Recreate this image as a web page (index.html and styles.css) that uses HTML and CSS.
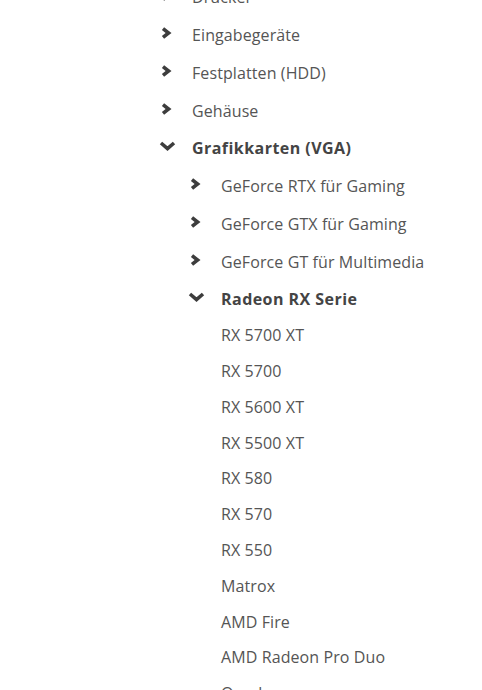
FILE: index.html
```html
<!DOCTYPE html>
<html lang="de">
<head>
    <meta charset="UTF-8">
    <meta name="viewport" content="width=device-width, initial-scale=1.0">
    <title>Kategorien</title>
    <link rel="stylesheet" href="styles.css">
</head>
<body>
  <nav class="category_tree">
    <ul class="level_one">
      <li><div class="row"><span class="toggle"><svg class="chev" viewBox="0 0 17 14"><polyline points="4,2.6 9.6,7 4,11.4"/></svg></span><span class="label">Drucker</span></div></li>
      <li><div class="row"><span class="toggle"><svg class="chev" viewBox="0 0 17 14"><polyline points="4,2.6 9.6,7 4,11.4"/></svg></span><span class="label">Eingabegeräte</span></div></li>
      <li><div class="row"><span class="toggle"><svg class="chev" viewBox="0 0 17 14"><polyline points="4,2.6 9.6,7 4,11.4"/></svg></span><span class="label">Festplatten (HDD)</span></div></li>
      <li><div class="row"><span class="toggle"><svg class="chev" viewBox="0 0 17 14"><polyline points="4,2.6 9.6,7 4,11.4"/></svg></span><span class="label">Gehäuse</span></div></li>
      <li class="open">
        <div class="row"><span class="toggle"><svg class="chev" viewBox="0 0 17 14"><polyline points="2,4 8.5,9.6 15,4"/></svg></span><span class="label">Grafikkarten (VGA)</span></div>
        <ul class="level_two">
          <li><div class="row"><span class="toggle"><svg class="chev" viewBox="0 0 17 14"><polyline points="4,2.6 9.6,7 4,11.4"/></svg></span><span class="label">GeForce RTX für Gaming</span></div></li>
          <li><div class="row"><span class="toggle"><svg class="chev" viewBox="0 0 17 14"><polyline points="4,2.6 9.6,7 4,11.4"/></svg></span><span class="label">GeForce GTX für Gaming</span></div></li>
          <li><div class="row"><span class="toggle"><svg class="chev" viewBox="0 0 17 14"><polyline points="4,2.6 9.6,7 4,11.4"/></svg></span><span class="label">GeForce GT für Multimedia</span></div></li>
          <li class="open">
            <div class="row"><span class="toggle"><svg class="chev" viewBox="0 0 17 14"><polyline points="2,4 8.5,9.6 15,4"/></svg></span><span class="label">Radeon RX Serie</span></div>
            <ul class="level_three">
              <li class="leaf">RX 5700 XT</li>
              <li class="leaf">RX 5700</li>
              <li class="leaf">RX 5600 XT</li>
              <li class="leaf">RX 5500 XT</li>
              <li class="leaf">RX 580</li>
              <li class="leaf">RX 570</li>
              <li class="leaf">RX 550</li>
            </ul>
          </li>
          <li class="leaf">Matrox</li>
          <li class="leaf">AMD Fire</li>
          <li class="leaf">AMD Radeon Pro Duo</li>
          <li class="leaf">Quadro</li>
        </ul>
      </li>
    </ul>
  </nav>
</body>
</html>
```

FILE: styles.css
```css
body {
    margin: 0;
    background: #fff;
    font-family: "Open Sans", "Liberation Sans", sans-serif;
    font-size: 16px;
    color: #555;
    overflow: hidden;
}

ul {
    list-style: none;
    margin: 0;
    padding: 0;
}

.level_one {
    margin-top: -21.6px; /* list is scrolled, "Drucker" is half out of view */
    padding-left: 159px;
}

.level_two {
    padding-left: 29px;
}

.row {
    display: flex;
    align-items: center;
    height: 37.75px;
}

.toggle {
    width: 33px;
    display: flex;
    align-items: center;
}

.chev {
    width: 17px;
    height: 14px;
    margin-top: -4px;
}

.chev polyline {
    fill: none;
    stroke: #3d3d3d;
    stroke-width: 3.6;
    stroke-linecap: butt;
    stroke-linejoin: miter;
}

.label {
    white-space: nowrap;
    letter-spacing: 0.1px;
}

.open > .row .label {
    font-weight: 700;
    color: #444;
    letter-spacing: 0.45px;
}

.leaf {
    height: 35.8px;
    line-height: 35.8px;
    padding-left: 33px;
    white-space: nowrap;
    letter-spacing: 0.1px;
}
```
